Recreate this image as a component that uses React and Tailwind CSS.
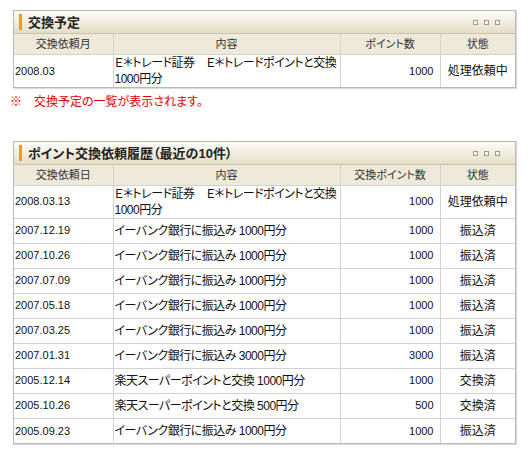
import React from "react";

const planned = [
  {
    date: "2008.03",
    lines: ["Ｅ＊トレード証券　Ｅ＊トレードポイントと交換", "1000円分"],
    points: "1000",
    status: "処理依頼中",
  },
];

const history = [
  {
    date: "2008.03.13",
    lines: ["Ｅ＊トレード証券　Ｅ＊トレードポイントと交換", "1000円分"],
    points: "1000",
    status: "処理依頼中",
  },
  { date: "2007.12.19", lines: ["イーバンク銀行に振込み 1000円分"], points: "1000", status: "振込済" },
  { date: "2007.10.26", lines: ["イーバンク銀行に振込み 1000円分"], points: "1000", status: "振込済" },
  { date: "2007.07.09", lines: ["イーバンク銀行に振込み 1000円分"], points: "1000", status: "振込済" },
  { date: "2007.05.18", lines: ["イーバンク銀行に振込み 1000円分"], points: "1000", status: "振込済" },
  { date: "2007.03.25", lines: ["イーバンク銀行に振込み 1000円分"], points: "1000", status: "振込済" },
  { date: "2007.01.31", lines: ["イーバンク銀行に振込み 3000円分"], points: "3000", status: "振込済" },
  { date: "2005.12.14", lines: ["楽天スーパーポイントと交換 1000円分"], points: "1000", status: "交換済" },
  { date: "2005.10.26", lines: ["楽天スーパーポイントと交換 500円分"], points: "500", status: "交換済" },
  { date: "2005.09.23", lines: ["イーバンク銀行に振込み 1000円分"], points: "1000", status: "振込済" },
];

function Panel({ title, heads, rows }) {
  return (
    <div className="ml-[13px] w-[503px] border border-[#b8b8b8] shadow-[1px_1px_1px_#dcdcdc]">
      {/* title bar */}
      <div className="h-[23px] flex items-center bg-gradient-to-b from-[#fdfcf8] to-[#e5dec6] border-b border-[#c8c1ab]">
        <div className="ml-[5px] w-[3px] h-[16px] bg-[#f39a1b]" />
        <span className="ml-[6px] text-[13px] font-bold text-[#222] leading-none">{title}</span>
        <div className="ml-auto mr-[15px] flex gap-[6px]">
          <span className="w-[5px] h-[5px] border border-[#9a9a9a] bg-[#f8f8f4]" />
          <span className="w-[5px] h-[5px] border border-[#9a9a9a] bg-[#f8f8f4]" />
          <span className="w-[5px] h-[5px] border border-[#9a9a9a] bg-[#f8f8f4]" />
        </div>
      </div>
      <table className="w-full table-fixed border-collapse">
        <colgroup>
          <col className="w-[99px]" />
          <col className="w-[227px]" />
          <col className="w-[100px]" />
          <col />
        </colgroup>
        <thead>
          <tr className="h-[20px] bg-[#efe9d9]">
            {heads.map((h, i) => (
              <th
                key={h}
                className={`p-0 text-[11px] font-normal text-[#333] text-center ${i > 0 ? "border-l border-[#d2d2d2]" : ""}`}
              >
                {h}
              </th>
            ))}
          </tr>
        </thead>
        <tbody>
          {rows.map((r) => (
            <tr key={r.date} className={`${r.lines.length > 1 ? "h-[33px]" : "h-[25px]"} border-t border-[#d2d2d2]`}>
              <td className="p-0 pl-[1px] text-[11px] text-[#111]">{r.date}</td>
              <td className="p-0 pl-[1px] text-[12px] leading-[16px] tracking-[-0.5px] text-[#111] border-l border-[#d2d2d2]">
                {r.lines.map((l) => (
                  <div key={l} className="whitespace-nowrap overflow-hidden">{l}</div>
                ))}
              </td>
              <td className="p-0 pr-[6px] text-right text-[11px] text-[#111] border-l border-[#d2d2d2]">{r.points}</td>
              <td className="p-0 text-center text-[12px] text-[#111] border-l border-[#d2d2d2]">{r.status}</td>
            </tr>
          ))}
        </tbody>
      </table>
    </div>
  );
}

export default function App() {
  return (
    <div className="w-[528px] min-h-[454px] bg-white pt-[10px] font-['Liberation_Sans','Noto_Sans_CJK_JP',sans-serif] [font-feature-settings:'palt']">
      <Panel title="交換予定" heads={["交換依頼月", "内容", "ポイント数", "状態"]} rows={planned} />
      <p className="mt-[6px] pl-[10px] text-[12px] leading-[16px] text-[#e00000]">※　交換予定の一覧が表示されます。</p>
      <div className="mt-[31px]">
        <Panel
          title="ポイント交換依頼履歴（最近の10件）"
          heads={["交換依頼日", "内容", "交換ポイント数", "状態"]}
          rows={history}
        />
      </div>
    </div>
  );
}
